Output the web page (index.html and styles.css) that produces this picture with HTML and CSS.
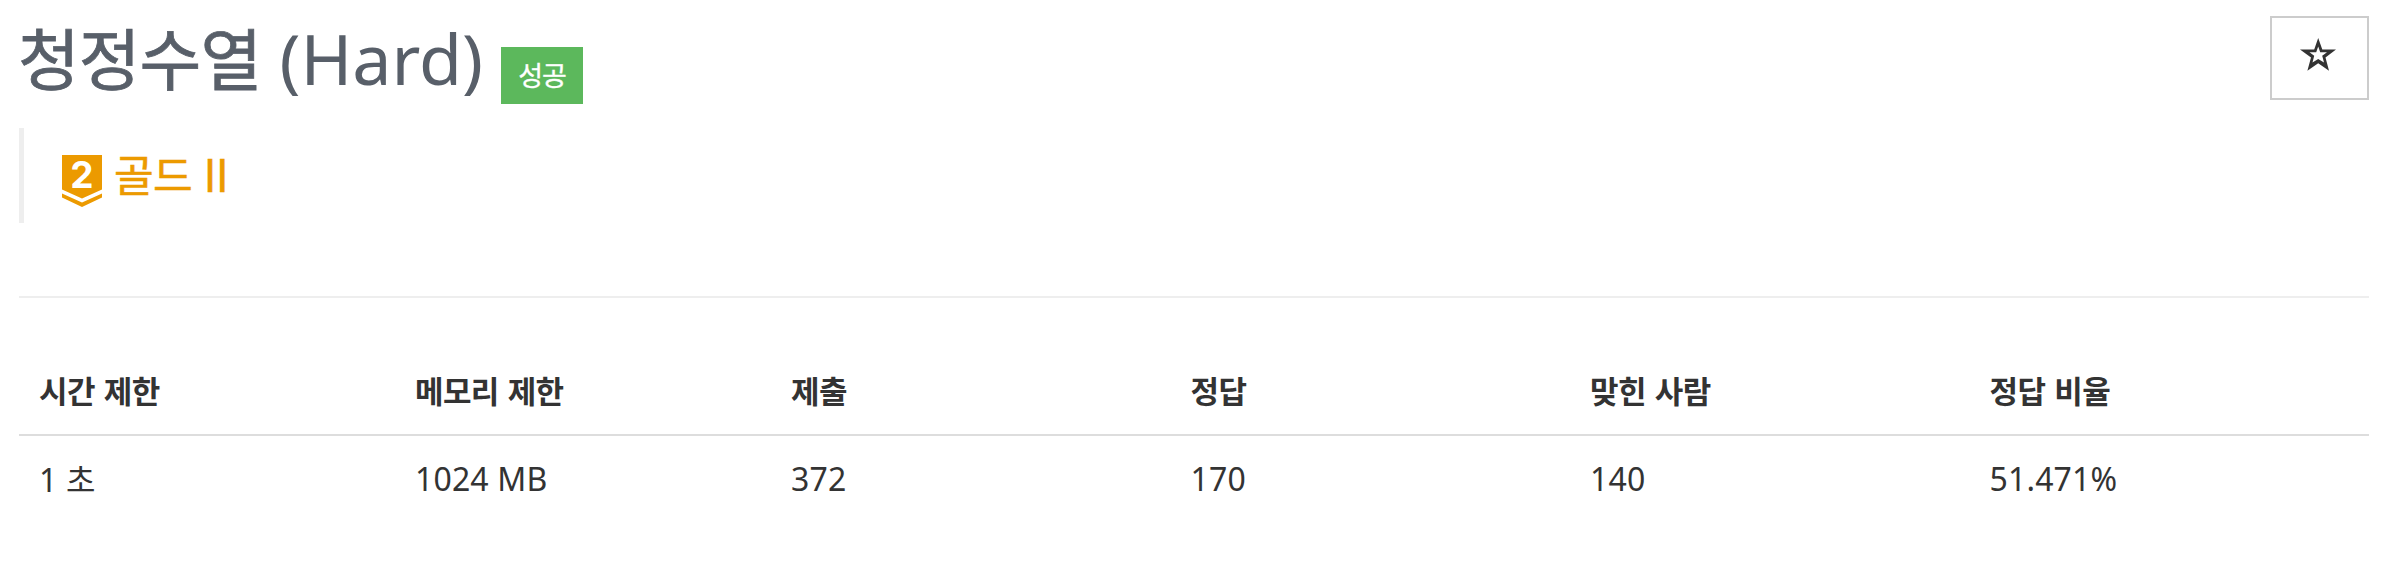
FILE: index.html
```html
<!DOCTYPE html>
<html lang="ko">
<head>
<meta charset="utf-8">
<title>청정수열 (Hard)</title>
<link rel="stylesheet" href="styles.css">
</head>
<body>
<main class="problem">
  <header class="head">
    <h1 class="title"><span class="hangul">청정수열</span> (Hard)</h1>
    <span class="label">성공</span>
    <button class="favorite" aria-label="즐겨찾기">
      <svg class="star" viewBox="0 0 36 33"><path fill="#333" fill-rule="evenodd" d="M18.200 0 22.300 11.500H36L25.500 19.500 29 32.700 18.200 25.200 7.400 32.700 11 19.500 0 11.500H14.200ZM18.200 8.500 16.200 14.200H9.500L14.200 17.800 12.500 24.500 18.200 21 24 24.500 22.200 17.800 27 14.200H20.200Z"/></svg>
    </button>
  </header>
  <blockquote class="tier">
    <svg class="badge" viewBox="0 0 40 52"><path fill="#ec9a00" d="M0 0H40V34.500L20 43.500 0 34.500ZM0 38.500 20 47.500 40 38.500V42.500L20 52 0 42.500Z"/><text class="badge-number" x="20" y="33" text-anchor="middle">2</text></svg>
    <span class="tier-name"><span class="hangul">골드</span> <span class="numeral">II</span></span>
  </blockquote>
  <table class="info">
    <thead><tr><th class="wide">시간 제한</th><th class="wide">메모리 제한</th><th>제출</th><th>정답</th><th>맞힌 사람</th><th>정답 비율</th></tr></thead>
    <tbody><tr><td>1 초</td><td>1024 MB</td><td>372</td><td>170</td><td>140</td><td>51.471%</td></tr></tbody>
  </table>
</main>
</body>
</html>
```
FILE: styles.css
```css
* { box-sizing: border-box; }
body { margin: 0; background: #fff; color: #333; font-family: "Noto Sans", "Noto Sans CJK KR", sans-serif; }
.problem { padding: 16px 29px 0 19px; }
.head { display: flex; height: 112px; }
.title { margin: -4px 0 0 -1px; font-size: 70px; line-height: 92px; font-weight: 400; color: #585f69; white-space: nowrap; }
.hangul { font-family: "Noto Sans CJK KR", sans-serif; font-size: .96em; letter-spacing: -.015em; line-height: 1; -webkit-text-stroke: .8px currentColor; }
.label { margin: 31px 0 0 18px; width: 82px; height: 57px; background: #5cb85c; color: #fff; font-size: 27px; line-height: 57px; letter-spacing: -.04em; text-align: center; -webkit-text-stroke: .3px currentColor; }
.favorite { margin-left: auto; width: 99px; height: 84px; padding: 0 3px 7px 0; border: 2px solid #ccc; background: #fff; display: flex; align-items: center; justify-content: center; }
.star { width: 36px; height: 33px; }
.tier { margin: 0; height: 95px; border-left: 5px solid #eee; padding-left: 38px; display: flex; align-items: flex-start; }
.badge { width: 40px; height: 52px; margin-top: 27px; }
.badge-number { font: 700 37px Inter, sans-serif; fill: #fff; }
.tier-name { margin-left: 12px; font-size: 45px; line-height: 93px; color: #ec9a00; }
.tier-name .hangul { -webkit-text-stroke-width: .5px; }
.numeral { font-family: Inter, sans-serif; letter-spacing: .4px; -webkit-text-stroke: .4px currentColor; }
.info { margin-top: 73px; width: 100%; border-top: 2px solid #eee; border-collapse: separate; border-spacing: 0; table-layout: fixed; font-size: 32px; text-align: left; }
.info th { height: 138px; padding: 46px 20px 0; border-bottom: 2px solid #ddd; font-size: 31px; font-weight: 700; letter-spacing: -.02em; word-spacing: .05em; }
.info .wide { width: 16%; }
.info td { height: 88px; padding: 0 20px 4px; letter-spacing: .15px; }
```
